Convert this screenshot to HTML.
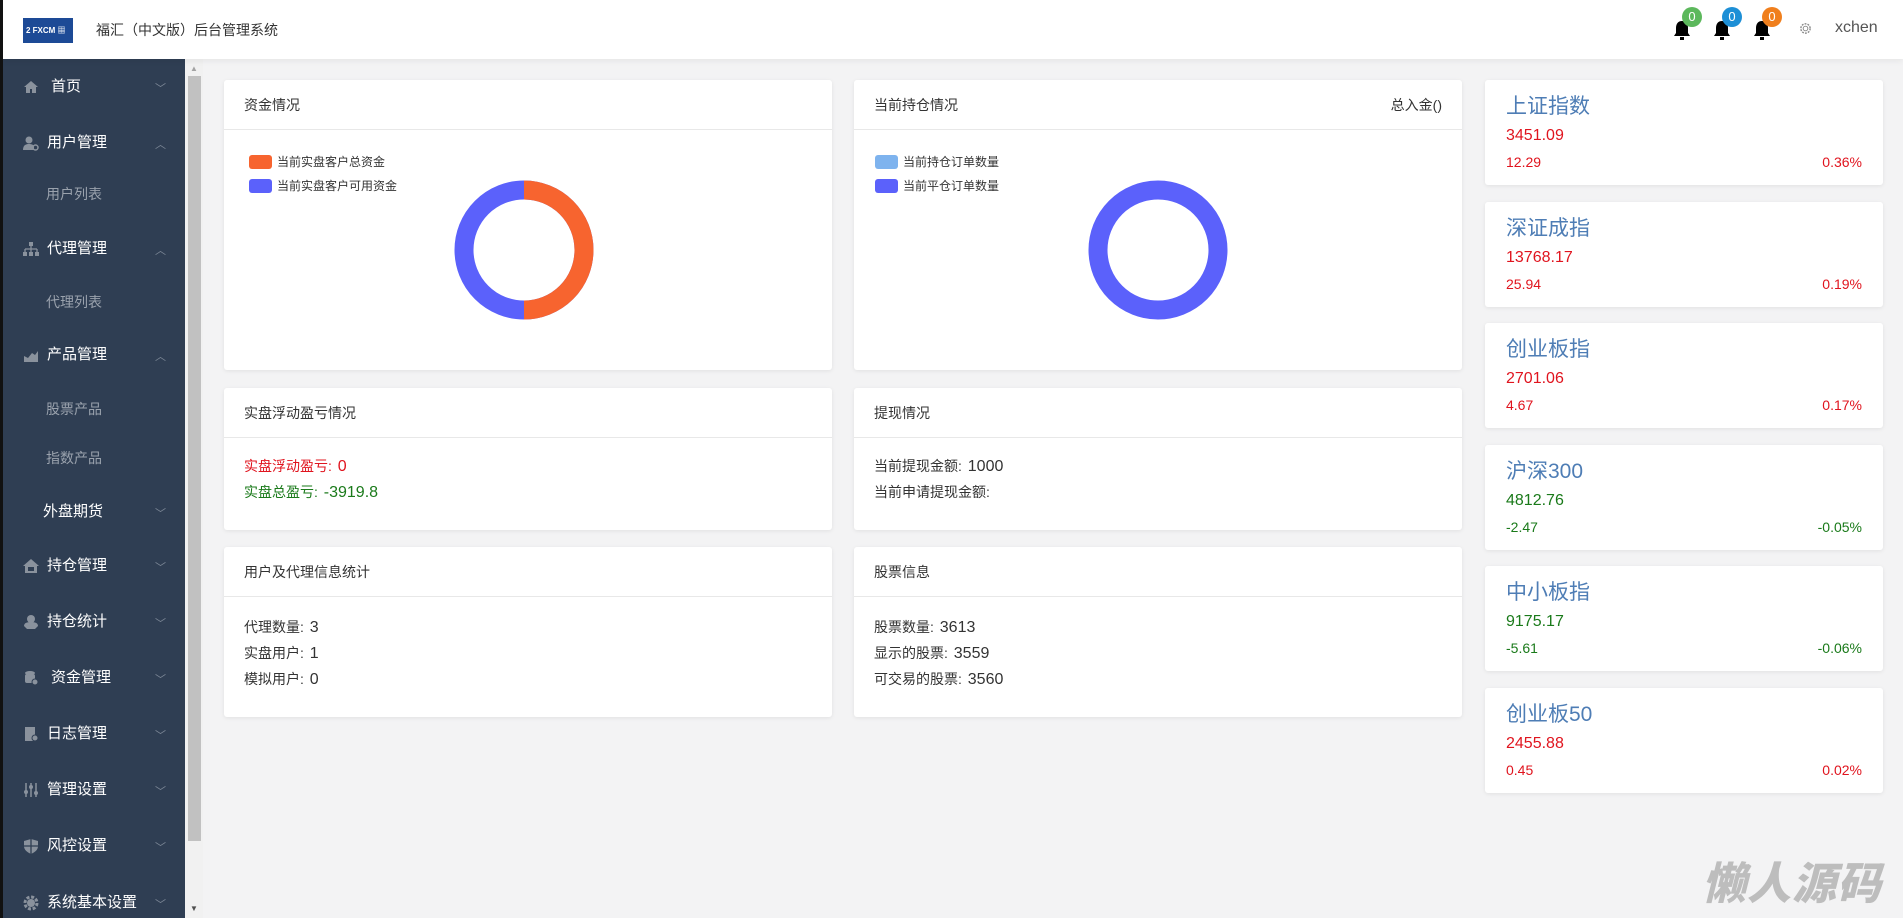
<!DOCTYPE html>
<html><head><meta charset="utf-8"><style>
*{margin:0;padding:0;box-sizing:border-box}
body{width:1903px;height:918px;overflow:hidden;background:#f3f3f4;font-family:"Liberation Sans","Noto Sans CJK SC",sans-serif;position:relative;color:#333}
.a{position:absolute}
#hdr{left:0;top:0;width:1903px;height:59px;background:#fff;box-shadow:0 2px 6px rgba(0,0,0,.06);z-index:2}
#lb{left:0;top:0;width:3px;height:918px;background:#111;z-index:3}
#side{left:3px;top:59px;width:182px;height:859px;background:#2f3e53}
#sb{left:185px;top:59px;width:18px;height:859px;background:#f1f1f1}
.mi{position:absolute;left:0;width:182px;color:#fff;font-size:15px;line-height:20px}
.mi .ic{position:absolute;left:20px;top:2px;width:16px;height:16px}
.mi .t{position:absolute;left:44px}
.mi .ch{position:absolute;left:152px;top:2px;color:#7d8897;font-size:11px}
.sub{position:absolute;left:43px;color:#9aa2ad;font-size:14px;line-height:20px}
.card{position:absolute;background:#fff;border-radius:3px;box-shadow:0 1px 4px rgba(0,0,0,.08)}
.card .h{height:50px;border-bottom:1px solid #e8e8e8;font-size:14px;line-height:50px;padding-left:20px;color:#333}
.ln{position:absolute;left:20px;font-size:14px;line-height:20px;color:#333}
.ln b{font-weight:normal;font-size:16px;margin-left:2px}
.ix .tt{position:absolute;left:21px;top:10px;font-size:21px;color:#4e7db5}
.ix .v{position:absolute;left:21px;top:47px;font-size:16px}
.ix .c{position:absolute;left:21px;top:74px;font-size:14px}
.ix .p{position:absolute;right:21px;top:74px;font-size:14px}
.r{color:#e0141e}.g{color:#1a7a1a}
.leg{position:absolute;font-size:12px;color:#333;line-height:14px}
.leg i{display:inline-block;width:23px;height:14px;border-radius:3px;vertical-align:top;margin-right:5px}
.bell{position:absolute;top:19px;width:18px;height:22px}
.bd{position:absolute;top:7px;width:20px;height:20px;border-radius:50%;color:#fff;font-size:13px;text-align:center;line-height:20px}
</style></head><body>
<div id="lb" class="a"></div>
<div id="hdr" class="a">
 <div class="a" style="left:23px;top:18px;width:50px;height:25px;background:#1d4a96;color:#fff;font-size:8px;font-weight:bold;line-height:25px;padding-left:3px">2 FXCM ▦</div>
 <div class="a" style="left:96px;top:20px;font-size:14px;color:#333">福汇（中文版）后台管理系统</div>
 <svg class="bell" style="left:1673px" viewBox="0 0 18 22"><path d="M9 2c-4 0-6 3-6 7v5l-2 3h16l-2-3V9c0-4-2-7-6-7z" fill="#000"/><rect x="7" y="18" width="4" height="3" fill="#000"/></svg>
 <svg class="bell" style="left:1713px" viewBox="0 0 18 22"><path d="M9 2c-4 0-6 3-6 7v5l-2 3h16l-2-3V9c0-4-2-7-6-7z" fill="#000"/><rect x="7" y="18" width="4" height="3" fill="#000"/></svg>
 <svg class="bell" style="left:1753px" viewBox="0 0 18 22"><path d="M9 2c-4 0-6 3-6 7v5l-2 3h16l-2-3V9c0-4-2-7-6-7z" fill="#000"/><rect x="7" y="18" width="4" height="3" fill="#000"/></svg>
 <div class="bd" style="left:1682px;background:#5cb85c">0</div>
 <div class="bd" style="left:1722px;background:#1d8fd6">0</div>
 <div class="bd" style="left:1762px;background:#f07f1d">0</div>
 <svg class="a" style="left:1799px;top:22px" width="13" height="13" viewBox="0 0 14 14"><circle cx="7" cy="7" r="5" fill="none" stroke="#888" stroke-width="1.5" stroke-dasharray="2 1.2"/><circle cx="7" cy="7" r="2.5" fill="none" stroke="#888"/></svg>
 <div class="a" style="left:1835px;top:19px;font-size:16px;color:#555">xchen</div>
</div>
<div id="side" class="a">
 <div class="mi" style="top:18px"><svg class="ic" viewBox="0 0 16 16"><path d="M8 2L1 8h2v6h4v-4h2v4h4V8h2z" fill="#8a929d"/></svg><span class="t" style="left:48px">首页</span><span class="ch">﹀</span></div>
 <div class="mi" style="top:74px"><svg class="ic" viewBox="0 0 16 16"><circle cx="6" cy="5" r="3.5" fill="#8a929d"/><path d="M0 15c0-5 3-6 6-6s5 1 5 3v3z" fill="#8a929d"/><circle cx="12.5" cy="12.5" r="2.5" fill="none" stroke="#8a929d" stroke-width="1.5"/></svg><span class="t">用户管理</span><span class="ch">︿</span></div>
 <div class="sub" style="top:125px">用户列表</div>
 <div class="mi" style="top:180px"><svg class="ic" viewBox="0 0 16 16"><rect x="6" y="1" width="4" height="4" fill="#8a929d"/><path d="M8 5v3M2 8h12M2 8v3M8 8v3M14 8v3" stroke="#8a929d" stroke-width="1.3"/><rect x="0" y="11" width="4" height="4" fill="#8a929d"/><rect x="6" y="11" width="4" height="4" fill="#8a929d"/><rect x="12" y="11" width="4" height="4" fill="#8a929d"/></svg><span class="t">代理管理</span><span class="ch">︿</span></div>
 <div class="sub" style="top:233px">代理列表</div>
 <div class="mi" style="top:286px"><svg class="ic" viewBox="0 0 16 16"><path d="M1 15V9l4 2 4-5 3 2 3-4v11z" fill="#8a929d"/></svg><span class="t">产品管理</span><span class="ch">︿</span></div>
 <div class="sub" style="top:340px">股票产品</div>
 <div class="sub" style="top:389px">指数产品</div>
 <div class="mi" style="top:443px"><span class="t" style="left:40px">外盘期货</span><span class="ch">﹀</span></div>
 <div class="mi" style="top:497px"><svg class="ic" viewBox="0 0 16 16"><path d="M8 1L0 8h2v7h12V8h2z" fill="#8a929d"/><rect x="5" y="9" width="6" height="4" fill="#2f3e53"/></svg><span class="t">持仓管理</span><span class="ch">﹀</span></div>
 <div class="mi" style="top:553px"><svg class="ic" viewBox="0 0 16 16"><circle cx="8" cy="5" r="4" fill="#8a929d"/><path d="M1 12c0-3 3-4 7-4s7 1 7 4l-3 3H4z" fill="#8a929d"/></svg><span class="t">持仓统计</span><span class="ch">﹀</span></div>
 <div class="mi" style="top:609px"><svg class="ic" viewBox="0 0 16 16"><ellipse cx="7" cy="3" rx="5" ry="2" fill="#8a929d"/><rect x="2" y="4" width="10" height="9" rx="2" fill="#8a929d"/><circle cx="12" cy="12" r="3" fill="#8a929d" stroke="#2f3e53"/></svg><span class="t" style="left:48px">资金管理</span><span class="ch">﹀</span></div>
 <div class="mi" style="top:665px"><svg class="ic" viewBox="0 0 16 16"><rect x="2" y="1" width="10" height="14" fill="#8a929d"/><circle cx="12" cy="12" r="3" fill="#8a929d" stroke="#2f3e53"/></svg><span class="t">日志管理</span><span class="ch">﹀</span></div>
 <div class="mi" style="top:721px"><svg class="ic" viewBox="0 0 16 16"><path d="M3 1v14M8 1v14M13 1v14" stroke="#8a929d" stroke-width="1.5"/><circle cx="3" cy="10" r="2" fill="#8a929d"/><circle cx="8" cy="5" r="2" fill="#8a929d"/><circle cx="13" cy="11" r="2" fill="#8a929d"/></svg><span class="t">管理设置</span><span class="ch">﹀</span></div>
 <div class="mi" style="top:777px"><svg class="ic" viewBox="0 0 16 16"><path d="M8 1L1 3v5c0 4 3 6 7 8 4-2 7-4 7-8V3z" fill="#8a929d"/><path d="M8 1v15M1 8h14" stroke="#2f3e53" stroke-width="1.3"/></svg><span class="t">风控设置</span><span class="ch">﹀</span></div>
 <div class="mi" style="top:834px"><svg class="ic" viewBox="0 0 16 16"><circle cx="8" cy="8" r="6" fill="none" stroke="#8a929d" stroke-width="3" stroke-dasharray="3 1.7"/><circle cx="8" cy="8" r="4" fill="#8a929d"/></svg><span class="t">系统基本设置</span><span class="ch">﹀</span></div>
</div>
<div id="sb" class="a">
 <div class="a" style="left:5px;top:5px;font-size:8px;color:#a3a3a3">▲</div>
 <div class="a" style="left:3px;top:17px;width:13px;height:765px;background:#c1c1c1"></div>
 <div class="a" style="left:5px;top:845px;font-size:8px;color:#505050">▼</div>
</div>

<div class="card" style="left:224px;top:80px;width:608px;height:290px">
 <div class="h">资金情况</div>
 <div class="leg" style="left:25px;top:75px"><i style="background:#f7642f"></i>当前实盘客户总资金</div>
 <div class="leg" style="left:25px;top:99px"><i style="background:#5b61fb"></i>当前实盘客户可用资金</div>
 <svg class="a" style="left:230px;top:100px" width="140" height="140" viewBox="0 0 140 140"><circle cx="70" cy="70" r="60" fill="none" stroke="#5b61fb" stroke-width="19"/><path d="M70 10A60 60 0 0 1 70 130" fill="none" stroke="#f7642f" stroke-width="19"/></svg>
</div>
<div class="card" style="left:854px;top:80px;width:608px;height:290px">
 <div class="h">当前持仓情况<span style="position:absolute;right:20px">总入金()</span></div>
 <div class="leg" style="left:21px;top:75px"><i style="background:#7eb3ee"></i>当前持仓订单数量</div>
 <div class="leg" style="left:21px;top:99px"><i style="background:#5b61fb"></i>当前平仓订单数量</div>
 <svg class="a" style="left:234px;top:100px" width="140" height="140" viewBox="0 0 140 140"><circle cx="70" cy="70" r="60" fill="none" stroke="#5b61fb" stroke-width="19"/></svg>
</div>
<div class="card" style="left:224px;top:388px;width:608px;height:142px">
 <div class="h">实盘浮动盈亏情况</div>
 <div class="ln r" style="top:68px">实盘浮动盈亏: <b>0</b></div>
 <div class="ln g" style="top:94px">实盘总盈亏: <b>-3919.8</b></div>
</div>
<div class="card" style="left:854px;top:388px;width:608px;height:142px">
 <div class="h">提现情况</div>
 <div class="ln" style="top:68px">当前提现金额: <b>1000</b></div>
 <div class="ln" style="top:94px">当前申请提现金额:</div>
</div>
<div class="card" style="left:224px;top:547px;width:608px;height:170px">
 <div class="h">用户及代理信息统计</div>
 <div class="ln" style="top:70px">代理数量: <b>3</b></div>
 <div class="ln" style="top:96px">实盘用户: <b>1</b></div>
 <div class="ln" style="top:122px">模拟用户: <b>0</b></div>
</div>
<div class="card" style="left:854px;top:547px;width:608px;height:170px">
 <div class="h">股票信息</div>
 <div class="ln" style="top:70px">股票数量: <b>3613</b></div>
 <div class="ln" style="top:96px">显示的股票: <b>3559</b></div>
 <div class="ln" style="top:122px">可交易的股票: <b>3560</b></div>
</div>

<div class="card ix" style="left:1485px;top:80px;width:398px;height:105px"><div class="tt">上证指数</div><div class="v r">3451.09</div><div class="c r">12.29</div><div class="p r">0.36%</div></div>
<div class="card ix" style="left:1485px;top:202px;width:398px;height:105px"><div class="tt">深证成指</div><div class="v r">13768.17</div><div class="c r">25.94</div><div class="p r">0.19%</div></div>
<div class="card ix" style="left:1485px;top:323px;width:398px;height:105px"><div class="tt">创业板指</div><div class="v r">2701.06</div><div class="c r">4.67</div><div class="p r">0.17%</div></div>
<div class="card ix" style="left:1485px;top:445px;width:398px;height:105px"><div class="tt">沪深300</div><div class="v g">4812.76</div><div class="c g">-2.47</div><div class="p g">-0.05%</div></div>
<div class="card ix" style="left:1485px;top:566px;width:398px;height:105px"><div class="tt">中小板指</div><div class="v g">9175.17</div><div class="c g">-5.61</div><div class="p g">-0.06%</div></div>
<div class="card ix" style="left:1485px;top:688px;width:398px;height:105px"><div class="tt">创业板50</div><div class="v r">2455.88</div><div class="c r">0.45</div><div class="p r">0.02%</div></div>

<div class="a" style="left:1702px;top:856px;font-size:44px;font-weight:900;font-style:italic;color:#bdbdbd;letter-spacing:1px;font-family:'Noto Sans CJK SC',sans-serif;line-height:48px">懒人源码</div>
</body></html>
